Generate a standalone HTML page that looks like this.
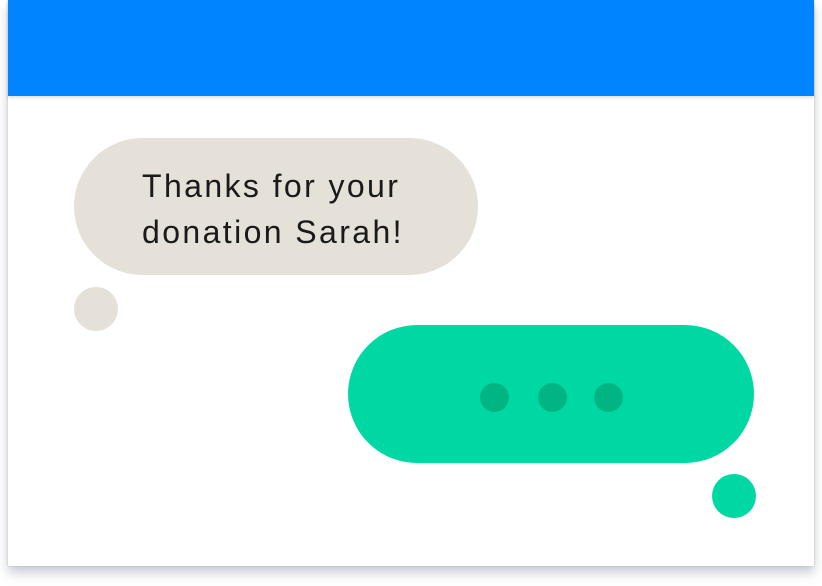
<!DOCTYPE html>
<html><head><style>
html,body{margin:0;padding:0;width:822px;height:586px;background:#fff;overflow:hidden}
.card{position:absolute;left:8px;top:0;width:806px;height:566px;background:#fff;box-shadow:0 7px 10px rgba(150,160,175,0.5),0 0 2px rgba(150,160,175,0.6)}
.hdr{position:absolute;left:0;top:0;width:806px;height:96px;background:#0084ff;box-shadow:0 2px 3px rgba(0,0,0,0.12)}
.b{position:absolute;border-radius:70px}
.c{position:absolute;border-radius:50%}
.t{position:absolute;left:142px;top:163px;font-family:"Liberation Sans",sans-serif;font-size:32px;line-height:46px;color:#1a1a1a;letter-spacing:2.4px;white-space:nowrap}
</style></head><body>
<div class="card"><div class="hdr"></div></div>
<div class="b" style="left:74px;top:138px;width:404px;height:137px;background:#e5e0d8"></div>
<div class="t">Thanks for your<br>donation Sarah!</div>
<div class="c" style="left:74px;top:287px;width:44px;height:44px;background:#e5e0d8"></div>
<div class="b" style="left:348px;top:325px;width:406px;height:138px;background:#00d8a4"></div>
<div class="c" style="left:480px;top:383px;width:29px;height:29px;background:#00b483"></div>
<div class="c" style="left:538px;top:383px;width:29px;height:29px;background:#00b483"></div>
<div class="c" style="left:594px;top:383px;width:29px;height:29px;background:#00b483"></div>
<div class="c" style="left:712px;top:474px;width:44px;height:44px;background:#00d8a4"></div>
</body></html>
